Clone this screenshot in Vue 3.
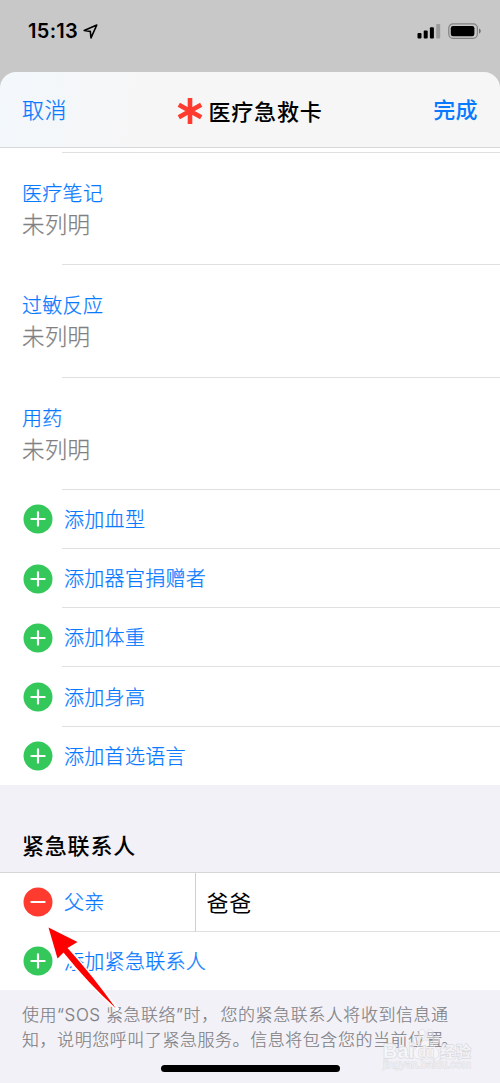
<script setup>
const notes = ['医疗笔记', '过敏反应', '用药']
const additions = ['添加血型', '添加器官捐赠者', '添加体重', '添加身高', '添加首选语言']
</script>

<template>
  <main class="phone">
    <div class="status">
      <span class="time">15:13</span>
      <svg class="locate" width="15" height="15" viewBox="0 0 15 15">
        <path d="M1.200 6.500 13.800 1 8 13.800 7.300 7.400Z" fill="none" stroke="#000" stroke-width="1.600" stroke-linejoin="round" />
      </svg>
      <svg class="device" width="66" height="18" viewBox="0 0 66 18">
        <rect x="0.5" y="11" width="4" height="5.5" rx="1" />
        <rect x="6.7" y="8.5" width="4" height="8" rx="1" />
        <rect x="12.9" y="5.2" width="4" height="11.3" rx="1" />
        <rect x="19.2" y="2" width="4" height="14.5" rx="1" fill="#9b9b9b" />
        <rect x="31.8" y="1.9" width="28.6" height="14.4" rx="4.2" fill="none" stroke="#818181" stroke-width="1.2" />
        <rect x="33.8" y="4" width="23.6" height="10.3" rx="2.2" />
        <path d="M62 6.5q1.8.8 1.8 2.6t-1.8 2.6Z" fill="#707070" />
      </svg>
    </div>

    <section class="sheet">
      <header class="bar">
        <span class="cancel">取消</span>
        <h1 class="title">
          <svg width="26" height="28" viewBox="0 0 26 28">
            <path d="M13 1v26M1.8 7.7l22.4 12.6M24.2 7.7 1.8 20.3" stroke="#ff3b30" stroke-width="4.6" />
          </svg>
          <span>医疗急救卡</span>
        </h1>
        <span class="done">完成</span>
      </header>

      <div class="gap"></div>
      <div v-for="note in notes" :key="note" class="note">
        <div class="label">{{ note }}</div>
        <div class="value">未列明</div>
      </div>

      <div v-for="item in additions" :key="item" class="row">
        <svg class="badge" viewBox="0 0 30 30">
          <circle cx="15" cy="15" r="14.5" fill="#34c759" />
          <path d="M15 8.4v13.2M8.4 15h13.2" stroke="#fff" stroke-width="2.2" stroke-linecap="round" />
        </svg>
        <span class="label">{{ item }}</span>
      </div>
    </section>

    <h2 class="heading">紧急联系人</h2>

    <section class="contacts">
      <div class="row contact">
        <svg class="badge" viewBox="0 0 30 30">
          <circle cx="15" cy="15" r="14.5" fill="#ff3b30" />
          <path d="M8.4 15h13.2" stroke="#fff" stroke-width="2.2" stroke-linecap="round" />
        </svg>
        <span class="label relation">父亲</span>
        <span class="name">爸爸</span>
      </div>
      <div class="row">
        <svg class="badge" viewBox="0 0 30 30">
          <circle cx="15" cy="15" r="14.5" fill="#34c759" />
          <path d="M15 8.4v13.2M8.4 15h13.2" stroke="#fff" stroke-width="2.2" stroke-linecap="round" />
        </svg>
        <span class="label">添加紧急联系人</span>
      </div>
    </section>

    <footer class="foot">
      <p><span class="lead">使用<i>“SOS</i> 紧急联络<i>”</i>时，</span>您的紧急联系人将收到信息通</p>
      <p>知，说明您呼叫了紧急服务。信息将包含您的当前位置<span class="stop">。</span></p>
    </footer>

    <div class="home"></div>

    <svg class="arrow" width="76" height="88" viewBox="0 0 76 88">
      <path d="M5 4 34 18 24 24 73 85 17 29 13 36Z" fill="#fff" stroke="#fff" stroke-width="4" stroke-linejoin="round" />
      <path d="M4.5 3.5 33.5 18 23.5 24Q49 52 72 84.500Q44 59 19.500 28.500L13.500 34.500Z" fill="#f00" />
    </svg>

    <svg class="mark" width="94" height="48" viewBox="0 0 94 48">
      <g class="paw">
        <ellipse cx="34" cy="13" rx="3" ry="4" />
        <ellipse cx="40" cy="7" rx="3.200" ry="4.500" />
        <ellipse cx="48" cy="7" rx="3.200" ry="4.500" />
        <ellipse cx="54" cy="13" rx="3" ry="4" />
        <path d="M44 13c5 0 6 5 10 8 5 4 3 11-3 11H37c-6 0-8-7-3-11 4-3 5-8 10-8Z" />
      </g>
      <g class="markText">
        <text x="1" y="31" class="latin" textLength="31" lengthAdjust="spacingAndGlyphs">Bai</text>
        <text x="36" y="29.500" class="du" textLength="16" lengthAdjust="spacingAndGlyphs">du</text>
        <text x="58" y="29.500" class="cjk" textLength="31">经验</text>
        <text x="1" y="41" class="url" textLength="88" lengthAdjust="spacingAndGlyphs">jingyan.baidu.com</text>
      </g>
    </svg>
  </main>
</template>

<style>
body {
  margin: 0;
  background: #f2f1f7;
}
</style>

<style scoped>
.phone {
  position: relative;
  width: 500px;
  height: 1083px;
  overflow: hidden;
  background: #f2f1f7;
  font-family: "Liberation Sans", "Noto Sans CJK SC", sans-serif;
  font-weight: 300;
  color: #000;
}
.status {
  display: flex;
  align-items: center;
  height: 72px;
  box-sizing: border-box;
  padding: 0 17px 10px 28px;
  background: #c8c8c9;
}
.time {
  width: 54px;
  font: 600 20px/24px Inter, sans-serif;
  letter-spacing: 0.3px;
}
.locate { margin-left: 1px; }
.device { margin-left: auto; }
.sheet {
  height: 713px;
  box-sizing: border-box;
  background: linear-gradient(#c8c8c9 20px, #fff 20px);
}
.bar {
  display: grid;
  grid-template-columns: 1fr auto 1fr;
  align-items: center;
  height: 76px;
  box-sizing: border-box;
  padding: 0 22px;
  border-radius: 16px 16px 0 0;
  border-bottom: 1px solid #d8d8da;
  background: linear-gradient(100deg, #f3f8fc, #f6f6f6 30%);
  font-size: 22px;
  letter-spacing: 0.4px;
}
.cancel, .done {
  margin-top: -3px;
  color: #087aff;
}
.cancel, .label, .value {
  -webkit-text-stroke: 0.25px currentColor;
}
.done {
  justify-self: end;
  font-weight: 500;
}
.title {
  display: flex;
  align-items: center;
  gap: 6px;
  margin: 3px 0 0;
  font-size: 22px;
  font-weight: 500;
  letter-spacing: 0.8px;
}
.title span {
  margin: -2px 0 0 -1px;
}
.gap { height: 4px; }
.note {
  height: 112.4px;
  box-sizing: border-box;
  padding: 27px 22px 0;
  background: linear-gradient(#e0e0e2, #e0e0e2) 62px 0 / 100% 1px no-repeat;
}
.label {
  color: #087aff;
  font-size: 20px;
  line-height: 30px;
  letter-spacing: 0.3px;
}
.value {
  margin-top: 1px;
  color: #808082;
  font-size: 22.500px;
  line-height: 32px;
  letter-spacing: 0.2px;
}
.row {
  display: flex;
  align-items: center;
  height: 59.1px;
  box-sizing: border-box;
  padding-left: 22.500px;
  padding-top: 3px;
  background: linear-gradient(#e0e0e2, #e0e0e2) 62px 0 / 100% 1px no-repeat;
}
.badge {
  flex: none;
  width: 30px;
  height: 30px;
  margin: -1.500px 11.500px 0 0;
}
.heading {
  box-sizing: border-box;
  height: 87px;
  margin: 0;
  padding: 46px 22px 0;
  font-size: 22px;
  line-height: 32px;
  font-weight: 500;
  letter-spacing: 0.8px;
}
.contacts {
  height: 118px;
  background: #fff;
}
.contact {
  background: none;
  border-top: 1px solid #d6d6d9;
  padding-top: 2px;
}
.relation {
  width: 130.500px;
}
.name {
  display: flex;
  align-items: center;
  height: 59px;
  box-sizing: border-box;
  margin-top: -2px;
  padding: 0 0 3px 11px;
  border-left: 1px solid #cfcfd2;
  font-size: 22px;
  font-weight: 400;
  letter-spacing: 0.8px;
}
.foot {
  padding: 13px 22px 0;
  color: #7e7e83;
  font-size: 17px;
  line-height: 24.500px;
  letter-spacing: 0.55px;
  -webkit-text-stroke: 0.15px currentColor;
}
.foot p {
  margin: 0;
  white-space: nowrap;
}
.lead {
  display: inline-block;
  width: 198.500px;
}
.stop {
  margin-left: -2px;
}
.foot i {
  font-family: Inter, sans-serif;
  font-style: normal;
}
.home {
  position: absolute;
  left: 161px;
  top: 1065px;
  width: 179px;
  height: 7px;
  border-radius: 4px;
  background: #000;
}
.arrow {
  position: absolute;
  left: 44px;
  top: 924px;
}
.mark {
  position: absolute;
  left: 382px;
  top: 1027px;
}
.paw {
  fill: #fff;
  fill-opacity: 0.35;
  stroke: #dedee3;
  stroke-width: 0.7px;
}
.markText {
  fill: #fafafc;
  fill-opacity: 0.75;
  stroke: #dadae0;
  stroke-width: 1.300px;
  paint-order: stroke;
  font-weight: 700;
}
.latin, .du { font-family: "Liberation Sans", sans-serif; }
.latin { font-size: 20px; }
.du {
  font-size: 14px;
}
.cjk {
  font-family: "Noto Sans CJK SC", sans-serif;
  font-size: 15px;
}
.url {
  font-family: "Liberation Sans", sans-serif;
  font-size: 10.500px;
  font-weight: 400;
  stroke-width: 0.8px;
}
</style>
